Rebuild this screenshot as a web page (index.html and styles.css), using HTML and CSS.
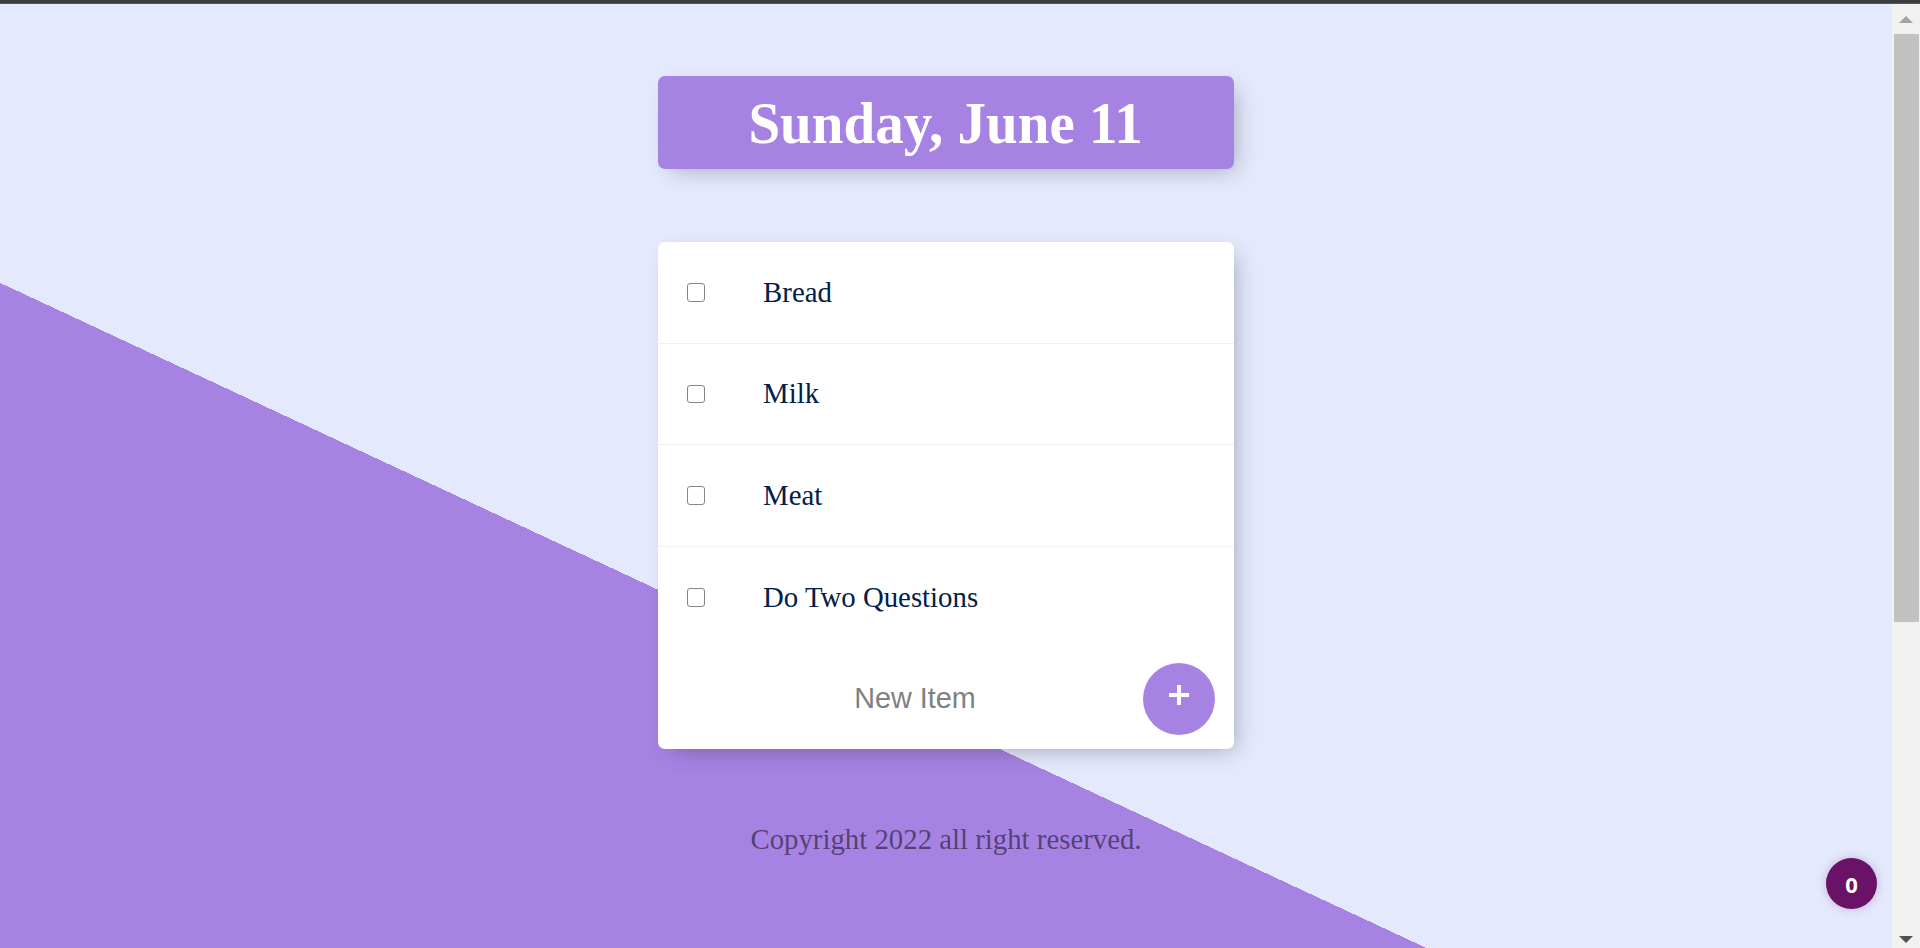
FILE: index.html
```html
<!DOCTYPE html>
<html lang="en">
<head>
<meta charset="utf-8">
<title>To Do List</title>
<link rel="stylesheet" href="styles.css">
</head>
<body>
<div class="topbar"></div>
<div class="window">
  <main class="page">
    <div class="box heading">
      <h1 class="title"><span class="title-text">Sunday, June 11</span></h1>
    </div>
    <div class="box list">
      <div class="item">
        <input class="check" type="checkbox">
        <p class="label">Bread</p>
      </div>
      <div class="item">
        <input class="check" type="checkbox">
        <p class="label">Milk</p>
      </div>
      <div class="item">
        <input class="check" type="checkbox">
        <p class="label">Meat</p>
      </div>
      <div class="item">
        <input class="check" type="checkbox">
        <p class="label">Do Two Questions</p>
      </div>
      <form class="new-form">
        <input class="new-input" type="text" name="newItem" placeholder="New Item" autocomplete="off">
        <button class="add-btn" type="submit" name="list" aria-label="Add">
          <svg class="plus" width="20" height="20" viewBox="0 0 20 20"><path d="M10 0V20M0 10H20" stroke="#fff" stroke-width="4" fill="none"/></svg>
        </button>
      </form>
    </div>
    <footer class="footer">Copyright 2022 all right reserved.</footer>
    <div class="badge">0</div>
  </main>
  <div class="scrollbar">
    <div class="arrow arrow-up"></div>
    <div class="track"><div class="thumb"></div></div>
    <div class="arrow arrow-down"></div>
  </div>
</div>
</body>
</html>
```

FILE: styles.css
```css
* { box-sizing: border-box; }

html, body {
  margin: 0;
  padding: 0;
  height: 100%;
  overflow: hidden;
}

body {
  font-family: "Liberation Serif", "Times New Roman", serif;
  background: #e4e9fd;
}

.topbar {
  height: 4px;
  background: #3b3c3f;
  border-bottom: 1px solid #55575b;
}

.window {
  display: flex;
  height: 944px;
}

.page {
  position: relative;
  flex: 1;
  height: 944px;
  overflow: hidden;
  padding-top: 72px;
  background-color: #e4e9fd;
  background-image: linear-gradient(25deg, #a683e3 50%, #e4e9fd 50%);
  background-size: 1892px 1440px;
  background-repeat: no-repeat;
  background-position: 0 0;
}

.box {
  width: 576px;
  margin: 0 auto;
  border-radius: 7px;
  box-shadow: 7px 7px 22px -7px rgba(0, 0, 0, 0.3);
}

.heading {
  background: #a683e3;
  text-align: center;
  padding: 14.5px;
}

.title {
  margin: 0;
  color: #fff;
  font-size: 60px;
  line-height: 64px;
  font-weight: 700;
}

.title-text {
  display: inline-block;
  transform: scaleX(0.95);
}

.list {
  margin-top: 73px;
  background: #fff;
}

.item {
  height: 101.6px;
  display: flex;
  align-items: center;
  border-bottom: 1px solid #f1f1f1;
}

.item:nth-child(4) {
  border-bottom: 0;
}

.check {
  appearance: none;
  -webkit-appearance: none;
  width: 18.7px;
  height: 18.7px;
  margin: 0 28.8px;
  border: 1.5px solid #858585;
  border-radius: 3px;
  background: #fff;
  flex: none;
}

.label {
  margin: 0;
  padding: 0 28.8px;
  font-size: 28.8px;
  color: #00204a;
  font-family: "Liberation Serif", "Times New Roman", serif;
}

.new-form {
  height: 101px;
  display: flex;
  align-items: center;
  padding-left: 29px;
  padding-right: 19px;
}

.new-input {
  flex: 1;
  min-width: 0;
  height: 86px;
  border: none;
  background: transparent;
  text-align: center;
  font-family: "Liberation Sans", Arial, sans-serif;
  font-size: 28.8px;
  color: #333;
  outline: none;
  padding: 0;
}

.new-input::placeholder {
  color: #808080;
  opacity: 1;
}

.add-btn {
  width: 72px;
  height: 72px;
  flex: none;
  border: 0;
  border-radius: 50%;
  background: #a683e3;
  display: flex;
  align-items: center;
  justify-content: center;
  padding: 0 0 7px 0;
}

.plus { display: block; }

.footer {
  margin-top: 74px;
  text-align: center;
  font-size: 28.8px;
  line-height: 33px;
  color: rgba(0, 0, 0, 0.5);
}

.badge {
  position: absolute;
  right: 15px;
  bottom: 39px;
  width: 51px;
  height: 51px;
  border-radius: 50%;
  background: #6a1268;
  color: #fff;
  font-family: "Open Sans", "Liberation Sans", sans-serif;
  font-weight: 700;
  font-size: 22px;
  display: flex;
  align-items: center;
  justify-content: center;
  box-shadow: 0 0 10px rgba(106, 18, 104, 0.25);
}

.scrollbar {
  width: 28px;
  flex: none;
  background: #f1f1f1;
  display: flex;
  flex-direction: column;
  align-items: center;
}

.arrow {
  width: 0;
  height: 0;
  border-left: 7px solid transparent;
  border-right: 7px solid transparent;
}

.arrow-up {
  margin-top: 12px;
  border-bottom: 7px solid #a3a3a3;
}

.arrow-down {
  margin-bottom: 5px;
  border-top: 7px solid #505050;
}

.track {
  flex: 1;
  width: 100%;
  padding: 11px 1px 0 2px;
}

.thumb {
  height: 588px;
  background: #c1c1c1;
}
```
